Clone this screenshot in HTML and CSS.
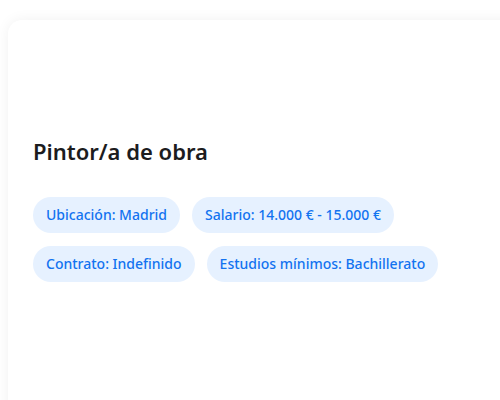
FILE: index.html
```html
<!DOCTYPE html>
<html lang="es">
<head>
<meta charset="UTF-8" />
<meta name="viewport" content="width=device-width, initial-scale=1" />
<title>Oferta de empleo</title>
<link rel="stylesheet" href="styles.css">
</head>
<body>
<div class="job-card">
    <div class="job-media"></div>
    <h2 class="job-title">Pintor/a de obra</h2>
    <div class="job-tags">
        <span class="tag">Ubicación: Madrid</span>
        <span class="tag">Salario: 14.000 € - 15.000 €</span>
        <span class="tag">Contrato: Indefinido</span>
        <span class="tag">Estudios mínimos: Bachillerato</span>
    </div>
</div>
</body>
</html>
```

FILE: styles.css
```css
html {
overflow: hidden;
}
body {
font-family: "Noto Sans", "Open Sans", sans-serif;
background: #ffffff;
margin: 0;
padding: 20px 0 0 8px;
}
.job-card {
background: #ffffff;
border-radius: 14px;
box-shadow: 0 0 14px rgba(0,0,0,0.06);
padding: 0 24px 160px 25px;
width: 540px;
}
.job-media {
height: 116px;
}
.job-title {
font-size: 22px;
font-weight: 600;
color: #1c1c1e;
margin: 0 0 31px;
}
.job-tags {
display: flex;
flex-wrap: wrap;
gap: 13px 12px;
width: 420px;
}
.tag {
background: #e6f1ff;
color: #1273f0;
font-size: 14px;
font-weight: 500;
line-height: 18px;
padding: 9px 13px;
border-radius: 18px;
}
```
